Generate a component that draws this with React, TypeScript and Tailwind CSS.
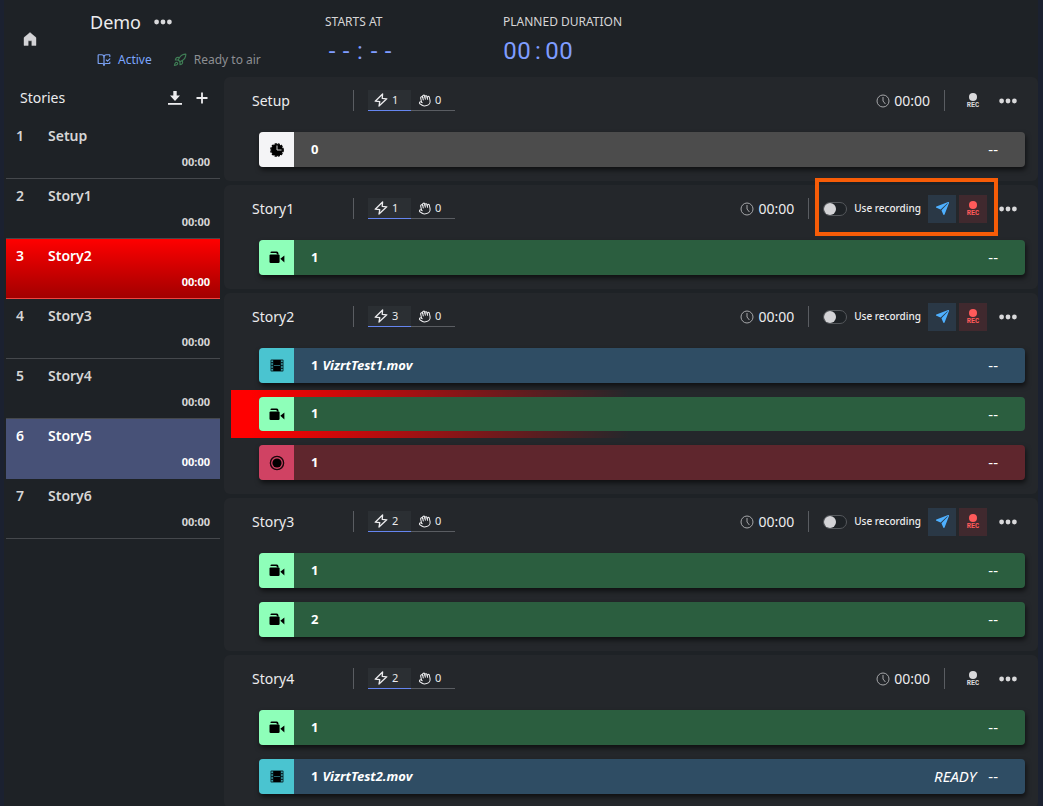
import React from "react";
import { BookOpenCheck, Hand, Rocket } from "lucide-react";
import { IoPaperPlane } from "react-icons/io5";

type Kind = "clock" | "camera" | "video" | "record";
type Item = { kind: Kind; label: string; name?: string; status?: string; live?: boolean };
type Story = { title: string; auto: number; recording?: boolean; highlighted?: boolean; items: Item[] };

const sidebarStories = [
  { title: "Setup", state: "idle" },
  { title: "Story1", state: "idle" },
  { title: "Story2", state: "live" },
  { title: "Story3", state: "idle" },
  { title: "Story4", state: "idle" },
  { title: "Story5", state: "next" },
  { title: "Story6", state: "idle" },
];

const stories: Story[] = [
  { title: "Setup", auto: 1, items: [{ kind: "clock", label: "0" }] },
  { title: "Story1", auto: 1, recording: true, highlighted: true, items: [{ kind: "camera", label: "1" }] },
  {
    title: "Story2",
    auto: 3,
    recording: true,
    items: [
      { kind: "video", label: "1", name: "VizrtTest1.mov" },
      { kind: "camera", label: "1", live: true },
      { kind: "record", label: "1" },
    ],
  },
  {
    title: "Story3",
    auto: 2,
    recording: true,
    items: [
      { kind: "camera", label: "1" },
      { kind: "camera", label: "2" },
    ],
  },
  {
    title: "Story4",
    auto: 2,
    items: [
      { kind: "camera", label: "1" },
      { kind: "video", label: "1", name: "VizrtTest2.mov", status: "READY" },
    ],
  },
];

const kindStyles: Record<Kind, { box: string; row: string }> = {
  clock: { box: "bg-[#f4f4f6]", row: "bg-[#4c4c4c]" },
  camera: { box: "bg-[#8effb9]", row: "bg-[#2b5e3f]" },
  video: { box: "bg-[#4ac4d0]", row: "bg-[#2f4d64]" },
  record: { box: "bg-[#d04263]", row: "bg-[#5f262d]" },
};

const sidebarStyles: Record<string, string> = {
  idle: "border-[#45484c] text-[#d6d6d6]",
  live: "border-[#f0453f] bg-linear-to-b from-[#ff0000] to-[#a20000] text-white",
  next: "border-[#475177] bg-[#475177] text-white",
};

function Dots() {
  return (
    <svg viewBox="0 0 18 6" className="h-[6px] w-[18px]" fill="currentColor" aria-hidden="true">
      <circle cx="2.6" cy="3" r="2.4" />
      <circle cx="9" cy="3" r="2.4" />
      <circle cx="15.4" cy="3" r="2.4" />
    </svg>
  );
}

function Bolt() {
  return (
    <svg
      viewBox="0 0 14 14"
      className="size-[14px]"
      fill="none"
      stroke="currentColor"
      strokeWidth="1.3"
      strokeLinejoin="round"
      aria-hidden="true"
    >
      <path d="M8.6 1 1.2 8.2 5.8 8.6 5 13 12.8 5.8 8.2 5.4Z" />
    </svg>
  );
}

function KindIcon({ kind }: { kind: Kind }) {
  if (kind === "clock")
    return (
      <svg viewBox="0 0 14 14" className="size-[14px]" aria-hidden="true">
        <circle cx="7" cy="7" r="6" fill="#000" />
        <circle cx="7" cy="7" r="6.2" fill="none" stroke="#000" strokeWidth="1.4" strokeDasharray="2.2 1.05" />
        <path d="M7 2.5V7h4.5" fill="none" stroke="#d5d5d5" strokeWidth="1" />
      </svg>
    );
  if (kind === "camera")
    return (
      <svg viewBox="0 0 16 13" className="h-[13px] w-4" fill="#000" aria-hidden="true">
        <path d="M1.5 1.6Q1.5.4 2.7.4H7.6Q8.8.4 9.2 1.6L9.7 3.4H8L7.4 2H1.5Z" />
        <path d="M1.6 3.4H9.4Q10.6 3.4 10.6 4.6V10.8Q10.6 12 9.4 12H1.7Q.5 12 .5 10.8V4.6Q.5 3.4 1.6 3.4Z" />
        <path d="M11.3 7.8 15.4 4.6V11.4Z" />
      </svg>
    );
  if (kind === "video")
    return (
      <svg viewBox="0 0 14 13" className="h-[13px] w-[14px]" aria-hidden="true">
        <rect x=".5" y=".5" width="13" height="12" rx="1" fill="#08262b" />
        <rect x="3.6" y="1" width="6.8" height="11" fill="#000" />
        <path d="M4 6.5h6" stroke="#2e7d86" strokeWidth=".8" />
        <path d="M2.1 1.4V12M11.9 1.4V12" stroke="#4ac4d0" strokeWidth="1.3" strokeDasharray="1.5 1.4" />
      </svg>
    );
  return (
    <svg viewBox="0 0 16 16" className="size-4" aria-hidden="true">
      <circle cx="8" cy="8" r="6.6" fill="none" stroke="#1a060b" strokeWidth="1.4" />
      <circle cx="8" cy="8" r="4.6" fill="#000" />
    </svg>
  );
}

function RecButton({ armed }: { armed?: boolean }) {
  return (
    <button
      type="button"
      className={
        armed
          ? "flex size-7 flex-col items-center justify-center bg-[#40292e] text-[#ff5a5a]"
          : "flex size-7 flex-col items-center justify-center text-[#d9d9db]"
      }
    >
      <span className="mt-px size-2 rounded-full bg-current" />
      <span className="font-['Liberation_Mono',monospace] text-[7px] leading-[8px] font-bold">REC</span>
    </button>
  );
}

function ClockDisplay({ value }: { value: string }) {
  return (
    <div className="mt-[6px] flex h-7 items-center font-[Roboto,sans-serif] text-2xl text-[#7f9dff]">
      {value.split("").map((char, i) => (
        <span key={i} className="w-[14px] text-center">
          {char}
        </span>
      ))}
    </div>
  );
}

function StoryItem({ item }: { item: Item }) {
  const style = kindStyles[item.kind];
  return (
    <li className="relative">
      {item.live && (
        <div className="absolute -inset-y-[7px] -left-7 w-[400px] bg-linear-to-r from-[#ff0000] from-5% to-[#ff0000]/0" />
      )}
      <div
        className={`relative flex items-center overflow-hidden rounded-[4px] text-[13px] text-white ${style.row} ${
          item.live ? "h-[34px]" : "h-[35px] shadow-[1px_3px_5px_rgba(0,0,0,0.6)]"
        }`}
      >
        <div className={`flex h-full w-[35px] items-center justify-center ${style.box}`}>
          <KindIcon kind={item.kind} />
        </div>
        <span className="ml-[17px] font-bold">{item.label}</span>
        {item.name && <span className="ml-1 font-bold italic">{item.name}</span>}
        <span className="ml-auto text-[15px] italic">{item.status}</span>
        <span className="mr-[27px] ml-3 text-[15px]">--</span>
      </div>
    </li>
  );
}

function StoryCard({ story }: { story: Story }) {
  return (
    <section className="rounded-md bg-[#24272b] pr-[13px] pb-[14px] pl-7">
      <header className="flex h-[47px] items-center">
        <h2 className="w-[101px] text-sm">{story.title}</h2>
        <div className="flex h-[21px] border-l border-[#5a5d62] pl-[14px] text-[11px]">
          <button type="button" className="flex w-[43px] items-center gap-1 border-b border-[#6585f0] bg-[#2b2f33] pl-[6px]">
            <Bolt />
            {story.auto}
          </button>
          <button type="button" className="flex w-11 items-center gap-1 border-b border-[#5a5d62] pl-[7px]">
            <Hand className="size-[13px] -rotate-12" />0
          </button>
        </div>
        <div className="ml-auto flex items-center gap-1 text-sm">
          <svg viewBox="0 0 14 14" className="size-[14px]" fill="none" stroke="#a5a6a9" aria-hidden="true">
            <circle cx="7" cy="7" r="6" />
            <path d="M7 3v4l2.4 3" />
          </svg>
          <time>00:00</time>
        </div>
        <div className="ml-[14px] h-[21px] w-px bg-[#5a5d62]" />
        {story.recording ? (
          <div className="relative ml-[14px] flex items-center">
            <label className="flex items-center gap-[7px] text-[10px] font-medium">
              <input
                type="checkbox"
                role="switch"
                className="h-[14px] w-6 appearance-none rounded-full border border-[#55585c] bg-[#1e2226] before:block before:size-3 before:rounded-full before:bg-[#d3d3d6] before:content-['']"
              />
              Use recording
            </label>
            <button
              type="button"
              aria-label="Send"
              className="mr-[3px] ml-[7px] flex size-7 items-center justify-center bg-[#2a3846] text-[#4eb0ff]"
            >
              <IoPaperPlane className="size-[15px]" />
            </button>
            <RecButton armed />
            {story.highlighted && (
              <div className="pointer-events-none absolute -top-[17px] -right-[11px] -bottom-[13px] -left-2 border-4 border-[#f75c07]" />
            )}
          </div>
        ) : (
          <div className="ml-[14px]">
            <RecButton />
          </div>
        )}
        <button type="button" aria-label="Story menu" className="mr-2 ml-3 text-[#d9d9db]">
          <Dots />
        </button>
      </header>
      <ul className="flex flex-col gap-[14px] pt-2 pl-[7px]">
        {story.items.map((item, i) => (
          <StoryItem key={i} item={item} />
        ))}
      </ul>
    </section>
  );
}

export default function App() {
  return (
    <div className="min-h-screen bg-[#1b2130] pr-[5px] pb-2 pl-1 font-['Noto_Sans',sans-serif] text-[#ececee]">
      <div className="bg-[#1e2226]">
        <header className="flex h-[77px] items-start">
          <a href="#" aria-label="Home" className="mt-8 ml-[19px] text-[#d3d3d6]">
            <svg viewBox="0 0 14 14" className="size-[14px]" fill="currentColor" aria-hidden="true">
              <path d="M7 .5 1 5.6V13.5H5.2V8.8H8.8V13.5H13V5.6Z" stroke="currentColor" strokeWidth=".4" strokeLinejoin="round" />
            </svg>
          </a>
          <div className="ml-[53px] w-[235px] pt-2">
            <div className="flex h-7 items-center gap-[13px]">
              <h1 className="text-lg">Demo</h1>
              <button type="button" aria-label="Show menu" className="text-[#d9d9db]">
                <Dots />
              </button>
            </div>
            <div className="mt-[14px] flex h-5 items-center pl-[7px] text-[12px]">
              <BookOpenCheck className="size-[14px] text-[#7ba2f5]" strokeWidth={2} />
              <span className="ml-[7px] text-[#7ba6ff]">Active</span>
              <Rocket className="ml-[21px] size-[14px] text-[#3f7d55]" strokeWidth={2} />
              <span className="ml-[7px] text-[#8d8f92]">Ready to air</span>
            </div>
          </div>
          <div className="w-[178px] pt-[13px] text-[12px] text-[#d6d6d6]">
            <div className="h-[18px]">STARTS AT</div>
            <ClockDisplay value="--:--" />
          </div>
          <div className="pt-[13px] text-[12px] text-[#d6d6d6]">
            <div className="h-[18px]">PLANNED DURATION</div>
            <ClockDisplay value="00:00" />
          </div>
        </header>
        <div className="flex">
          <aside className="w-[220px] pr-1 pl-[2px]">
            <div className="flex h-[42px] items-center pl-[14px]">
              <h2 className="text-sm">Stories</h2>
              <button type="button" aria-label="Import" className="ml-auto">
                <svg viewBox="0 0 16 16" className="size-4" fill="currentColor" aria-hidden="true">
                  <path d="M6.3 1H9.7V5.6H13L8 11 3 5.6H6.3Z" />
                  <rect x="1" y="13" width="14" height="1.8" />
                </svg>
              </button>
              <button type="button" aria-label="Add story" className="mr-3 ml-[13px]">
                <svg viewBox="0 0 12 12" className="size-3" stroke="currentColor" strokeWidth="1.8" aria-hidden="true">
                  <path d="M6 .5v11M.5 6h11" />
                </svg>
              </button>
            </div>
            <ol>
              {sidebarStories.map((story, i) => (
                <li key={story.title} className={`h-[60px] border-b font-semibold ${sidebarStyles[story.state]}`}>
                  <div className="flex pt-[7px] pl-[10px] text-sm">
                    <span className="w-8">{i + 1}</span>
                    <span>{story.title}</span>
                  </div>
                  <div className="pt-2 pr-[10px] text-right text-[11px] leading-4 font-bold">00:00</div>
                </li>
              ))}
            </ol>
          </aside>
          <main className="flex min-w-0 flex-1 flex-col gap-1">
            {stories.map((story) => (
              <StoryCard key={story.title} story={story} />
            ))}
          </main>
        </div>
      </div>
    </div>
  );
}
